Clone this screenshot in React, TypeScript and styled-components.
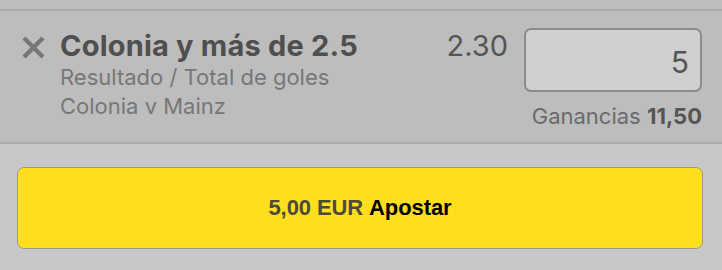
import React from "react";
import styled, { createGlobalStyle } from "styled-components";

const Global = createGlobalStyle`
  html, body { margin: 0; padding: 0; }
  body {
    width: 722px;
    height: 270px;
    overflow: hidden;
    background: #bdbdbd;
    font-family: Inter, "Liberation Sans", Arial, sans-serif;
  }
`;

const Page = styled.div`
  width: 722px;
  height: 270px;
  display: flex;
  flex-direction: column;
  background: #bdbdbd;
`;

const TopStrip = styled.div`
  height: 9px;
  border-bottom: 2px solid #ababab;
  flex: none;
`;

const BetRow = styled.div`
  flex: none;
  display: flex;
  align-items: flex-start;
  padding: 0 20px 0 21px;
  border-bottom: 2px solid #ababab;
  box-sizing: border-box;
  height: 133px;
`;

const RemoveButton = styled.button`
  border: none;
  background: none;
  padding: 0;
  margin: 24px 14px 0 0;
  width: 25px;
  height: 25px;
  display: flex;
  align-items: center;
  justify-content: center;
  cursor: pointer;
`;

const Info = styled.div`
  flex: 1;
  display: flex;
  flex-direction: column;
  padding-top: 17px;
`;

const Title = styled.div`
  font-size: 29px;
  font-weight: 700;
  color: #4f4f4f;
  line-height: 35px;
  letter-spacing: 0.2px;
`;

const Sub = styled.div`
  font-size: 22px;
  color: #777777;
  line-height: 29px;
`;

const Odds = styled.div`
  font-size: 29px;
  color: #555555;
  line-height: 34px;
  padding-top: 18px;
  margin-right: 16px;
`;

const StakeCol = styled.div`
  display: flex;
  flex-direction: column;
  align-items: flex-end;
  padding-top: 17px;
`;

const StakeBox = styled.div`
  width: 178px;
  height: 64px;
  box-sizing: border-box;
  border: 2px solid #8c8c8c;
  border-radius: 7px;
  background: #cfcfcf;
  display: flex;
  align-items: center;
  justify-content: flex-end;
  padding: 4px 11px 0 0;
  font-size: 30px;
  color: #555555;
`;

const Winnings = styled.div`
  margin-top: 11px;
  font-size: 22px;
  color: #6b6b6b;
  line-height: 27px;
`;

const Strong = styled.span`
  font-weight: 700;
  color: #555555;
`;

const Footer = styled.div`
  flex: 1;
  background: #c8c8c8;
  padding: 23px 19px 0 17px;
`;

const PlaceBet = styled.button`
  width: 100%;
  height: 82px;
  box-sizing: border-box;
  background: #ffdf1d;
  border: 1.5px solid #9a9a8a;
  border-radius: 7px;
  display: flex;
  align-items: center;
  justify-content: center;
  font-family: "Liberation Sans", Arial, sans-serif;
  font-size: 22px;
  font-weight: 700;
  letter-spacing: -0.1px;
  color: #000;
  cursor: pointer;
`;

const Amount = styled.span`
  color: #4d4a3a;
  margin-right: 6px;
`;

export default function App() {
  return (
    <>
      <Global />
      <Page>
        <TopStrip />
        <BetRow>
          <RemoveButton aria-label="Eliminar">
            <svg width="25" height="25" viewBox="0 0 25 25">
              <path d="M3 3 L22 22 M22 3 L3 22" stroke="#777" strokeWidth="4.4" strokeLinecap="butt" />
            </svg>
          </RemoveButton>
          <Info>
            <Title>Colonia y más de 2.5</Title>
            <Sub>Resultado / Total de goles</Sub>
            <Sub>Colonia v Mainz</Sub>
          </Info>
          <Odds>2.30</Odds>
          <StakeCol>
            <StakeBox>5</StakeBox>
            <Winnings>
              Ganancias <Strong>11,50</Strong>
            </Winnings>
          </StakeCol>
        </BetRow>
        <Footer>
          <PlaceBet>
            <Amount>5,00 EUR</Amount>Apostar
          </PlaceBet>
        </Footer>
      </Page>
    </>
  );
}
